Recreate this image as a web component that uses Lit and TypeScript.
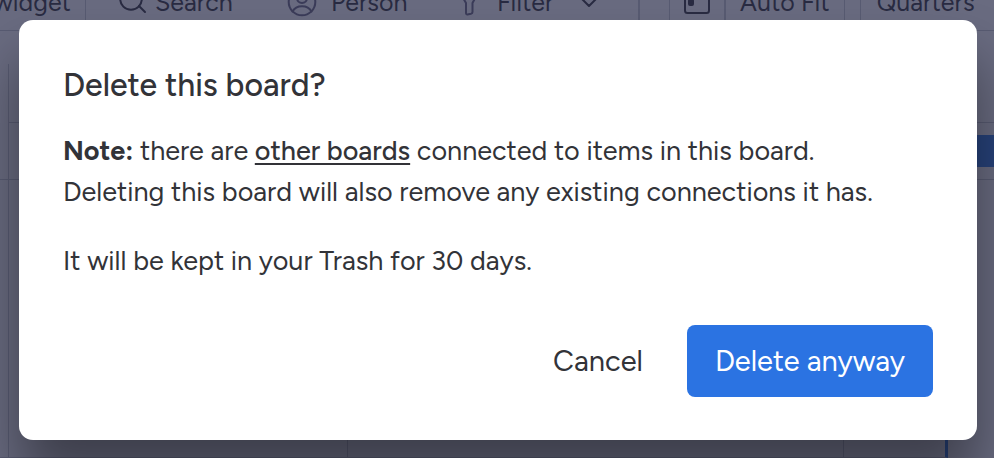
import { LitElement, html, css, svg } from "lit";
import { customElement } from "lit/decorators.js";

const searchIcon = svg`<circle cx="12" cy="11" r="10.8"/><path d="M20 18l6 6"/>`;
const personIcon = svg`<circle cx="15" cy="14" r="13.3"/><circle cx="15" cy="10" r="5"/><path d="M5.500 23.500c2-3.800 5.500-5.300 9.500-5.300s7.500 1.500 9.500 5.300"/>`;
const filterIcon = svg`<path d="M2 3h20l-6.500 12v9q0 1.500-1.500 1.800l-3.500.6q-1.500.2-1.500-1.500V15z"/>`;
const chevronIcon = svg`<path d="M2 3l8 8 8-8"/>`;
const layoutIcon = svg`<rect x="1" y="1" width="24" height="22" rx="2.500"/><rect class="solid" x="5" y="10" width="4" height="5" rx="1"/>`;

@customElement("board-page")
class BoardPage extends LitElement {
  static styles = css`
    :host {
      display: flex;
      flex-direction: column;
      color: #292b42;
      font: 400 25px/32px Figtree, Lato, sans-serif;
      overflow: hidden;
      --line: #585b72;
    }
    .toolbar {
      display: flex;
      align-items: center;
      flex: none;
      height: 57px;
      margin-top: -26px;
      border-bottom: 1px solid var(--line);
      box-sizing: border-box;
    }
    button {
      all: unset;
      box-sizing: border-box;
      display: flex;
      align-items: center;
      white-space: nowrap;
      flex: none;
    }
    svg {
      fill: none;
      stroke: currentColor;
      stroke-width: 2;
      stroke-linecap: round;
      stroke-linejoin: round;
      flex: none;
    }
    .solid { fill: currentColor; }
    .soft { color: #3b3c59; }
    .widget {
      width: 86px;
      height: 100%;
      justify-content: flex-end;
      padding-right: 14px;
      border-right: 1px solid var(--line);
    }
    .search { width: 168px; gap: 8px; margin-left: 33px; }
    .person { width: 170px; gap: 14px; }
    .filter { width: 181px; gap: 16px; }
    .filter .label { width: 66px; }
    .fit, .scale {
      display: flex;
      align-items: center;
      height: 100%;
      border: solid var(--line);
      border-width: 0 1px;
    }
    .fit { margin-left: 29px; }
    .divider { width: 2px; height: 100%; background: var(--line); }
    .pick { padding: 0 14px; height: 100%; }
    .scale { margin-left: 15px; flex: 1; border-right: 0; padding-left: 16px; }
    .chart {
      flex: 1;
      display: grid;
      grid-template-columns: 9px 339px 496px 104px 1fr;
      grid-template-rows: 33px 59px 57px 1fr;
    }
    .cell { border-right: 1px solid var(--line); border-bottom: 1px solid var(--line); }
    .span { grid-column: 2 / -1; border-bottom: 1px solid var(--line); }
    .top { grid-column: 1 / -1; }
    .gutter { grid-row: 2 / 4; }
    .track { display: flex; align-items: center; justify-content: flex-end; }
    .bar { width: 140px; height: 32px; background: #27427a; }
    .today { border-right: 3px solid #27427a; }
  `;
  render() {
    return html`
      <div class="toolbar">
        <button class="widget">Add widget</button>
        <button class="search"><svg width="28" height="29">${searchIcon}</svg>Search</button>
        <button class="person"><svg class="soft" width="30" height="29">${personIcon}</svg>Person</button>
        <button class="filter"><svg class="soft" width="24" height="29">${filterIcon}</svg><span class="label">Filter</span><svg width="20" height="14">${chevronIcon}</svg></button>
        <div class="divider"></div>
        <div class="fit">
          <button class="pick" aria-label="Layout"><svg width="26" height="25">${layoutIcon}</svg></button>
          <div class="divider"></div>
          <button class="pick">Auto Fit</button>
        </div>
        <div class="scale"><button>Quarters</button></div>
      </div>
      <div class="chart">
        <div class="top"></div>
        <div class="cell gutter"></div>
        <div class="span"></div>
        <div class="span track"><div class="bar"></div></div>
        <div class="cell"></div><div class="cell"></div><div class="cell"></div><div class="cell today"></div>
      </div>
    `;
  }
}

@customElement("confirm-dialog")
class ConfirmDialog extends LitElement {
  static styles = css`
    :host {
      display: block;
      box-sizing: border-box;
      padding: 44px 44px 43px;
      border-radius: 14px;
      background: #fff;
      color: #323338;
      box-shadow: 0 40px 56px rgba(0, 0, 0, 0.42);
      font: 400 27px/41px Figtree, Lato, sans-serif;
    }
    h2 { margin: 0; font-size: 32px; line-height: 42px; font-weight: 500; }
    p { margin: 0 0 28px; }
    .note { margin-top: 24px; }
    a { color: inherit; font-weight: 500; text-decoration-thickness: 2px; text-underline-offset: 3px; }
    .actions { display: flex; justify-content: flex-end; gap: 16px; margin-top: 44px; }
    button {
      height: 72px;
      padding: 0 28px;
      border: 0;
      border-radius: 8px;
      background: none;
      color: inherit;
      font: inherit;
      font-size: 29px;
      line-height: 36px;
    }
    .primary { background: #2b73e2; color: #fff; }
  `;
  render() {
    return html`
      <h2>Delete this board?</h2>
      <p class="note"><strong>Note:</strong> there are <a href="#boards">other boards</a> connected to items in this board.<br />Deleting this board will also remove any existing connections it has.</p>
      <p>It will be kept in your Trash for 30 days.</p>
      <div class="actions">
        <button>Cancel</button>
        <button class="primary">Delete anyway</button>
      </div>
    `;
  }
}

@customElement("app-root")
class AppRoot extends LitElement {
  static styles = css`
    :host {
      display: grid;
      min-height: 100vh;
      background: #696b80;
      overflow: hidden;
    }
    board-page, .overlay { grid-area: 1 / 1; min-width: 0; }
    .overlay { padding: 20px 17px 18px 19px; }
  `;
  render() {
    return html`
      <board-page></board-page>
      <div class="overlay">
        <confirm-dialog role="dialog" aria-modal="true" aria-label="Delete this board?"></confirm-dialog>
      </div>
    `;
  }
}
